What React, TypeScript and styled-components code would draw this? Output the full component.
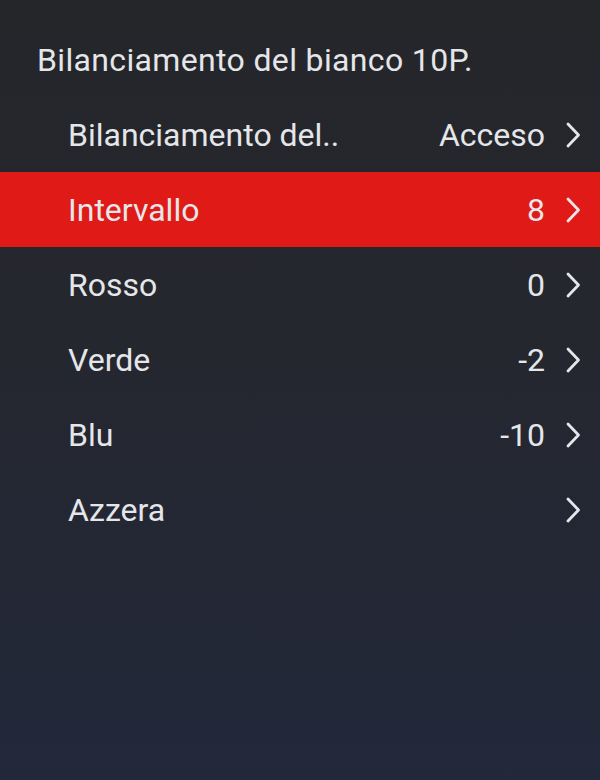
import React from 'react';
import styled, { createGlobalStyle } from 'styled-components';

const GlobalStyle = createGlobalStyle`
  html, body {
    margin: 0;
    padding: 0;
    background: #24262c;
  }
`;

const Screen = styled.div`
  width: 600px;
  height: 780px;
  box-sizing: border-box;
  background: linear-gradient(180deg, #25262a 0%, #25272e 40%, #22283a 100%);
  font-family: Roboto, 'Noto Sans', sans-serif;
  color: #e4e6ea;
  padding-top: 42px;
  overflow: hidden;
`;

const Title = styled.div`
  font-size: 32px;
  line-height: 36px;
  letter-spacing: 0.35px;
  padding-left: 37px;
  margin-bottom: 19px;
`;

const List = styled.div`
  display: flex;
  flex-direction: column;
`;

const Row = styled.div<{ $active?: boolean }>`
  display: flex;
  align-items: center;
  justify-content: space-between;
  height: 75px;
  padding: 0 19px 0 68px;
  background: ${(p) => (p.$active ? '#e01b17' : 'transparent')};
  font-size: 32px;
`;

const Label = styled.span``;

const Right = styled.div`
  display: flex;
  align-items: center;
  gap: 20px;
`;

const Value = styled.span``;

const Chevron = () => (
  <svg width="16" height="28" viewBox="0 0 16 28" fill="none">
    <path d="M3 3 L13.5 14 L3 25" stroke="#e4e6ea" strokeWidth="2.8" strokeLinecap="round" strokeLinejoin="round" />
  </svg>
);

const items = [
  { label: 'Bilanciamento del..', value: 'Acceso' },
  { label: 'Intervallo', value: '8', active: true },
  { label: 'Rosso', value: '0' },
  { label: 'Verde', value: '-2' },
  { label: 'Blu', value: '-10' },
  { label: 'Azzera', value: '' },
];

export default function App() {
  return (
    <>
      <GlobalStyle />
      <Screen>
        <Title>Bilanciamento del bianco 10P.</Title>
        <List>
          {items.map((it) => (
            <Row key={it.label} $active={it.active}>
              <Label>{it.label}</Label>
              <Right>
                {it.value && <Value>{it.value}</Value>}
                <Chevron />
              </Right>
            </Row>
          ))}
        </List>
      </Screen>
    </>
  );
}
